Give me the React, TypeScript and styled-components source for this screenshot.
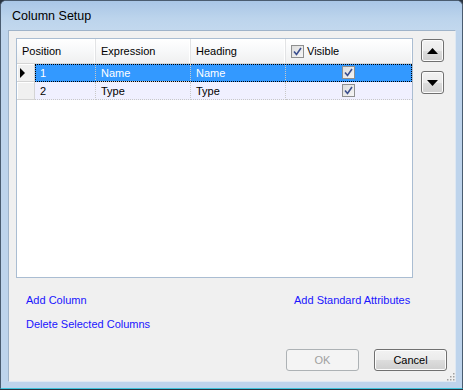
import styled, { createGlobalStyle } from 'styled-components'

const GlobalStyle = createGlobalStyle`
  html, body {
    margin: 0;
    padding: 0;
    background: #2a3440;
  }
  body {
    font-family: "Liberation Sans", Arial, sans-serif;
    font-size: 11px;
  }
`

interface ColumnRow {
  position: number
  expression: string
  heading: string
  visible: boolean
}

const rows: ColumnRow[] = [
  { position: 1, expression: 'Name', heading: 'Name', visible: true },
  { position: 2, expression: 'Type', heading: 'Type', visible: true },
]

function CheckMark() {
  return (
    <svg width="9" height="9" viewBox="0 0 9 9">
      <path d="M1 4.5 L3.5 7.5 L8 1" fill="none" stroke="#3b4f8f" strokeWidth="1.6" />
    </svg>
  )
}

function Arrow({ down }: { down?: boolean }) {
  return (
    <svg width="11" height="6" viewBox="0 0 11 6">
      {down ? <path d="M0 0 H11 L5.5 6 Z" fill="#000" /> : <path d="M0 6 H11 L5.5 0 Z" fill="#000" />}
    </svg>
  )
}

function App() {
  const selected = 0

  return (
    <>
      <GlobalStyle />
      <Window>
        <TitleBar>Column Setup</TitleBar>
        <Client>
          <TopArea>
            <GridBox>
              <HeaderRow>
                <HeaderCell $span={2}>Position</HeaderCell>
                <HeaderCell>Expression</HeaderCell>
                <HeaderCell>Heading</HeaderCell>
                <HeaderCell>
                  <CheckBox>
                    <CheckMark />
                  </CheckBox>
                  Visible
                </HeaderCell>
              </HeaderRow>
              {rows.map((row, i) => (
                <DataRow key={row.position} $selected={i === selected}>
                  <RowHeader>{i === selected && <Pointer />}</RowHeader>
                  <Cell>{row.position}</Cell>
                  <Cell>{row.expression}</Cell>
                  <Cell>{row.heading}</Cell>
                  <Cell $center $last>
                    {row.visible && (
                      <CheckBox>
                        <CheckMark />
                      </CheckBox>
                    )}
                  </Cell>
                </DataRow>
              ))}
            </GridBox>
            <SideButtons>
              <SquareButton>
                <Arrow />
              </SquareButton>
              <SquareButton>
                <Arrow down />
              </SquareButton>
            </SideButtons>
          </TopArea>

          <LinkRow>
            <Link>Add Column</Link>
            <Link>Add Standard Attributes</Link>
          </LinkRow>
          <LinkRow $second>
            <Link>Delete Selected Columns</Link>
          </LinkRow>

          <Footer>
            <DialogButton disabled>OK</DialogButton>
            <DialogButton>Cancel</DialogButton>
          </Footer>
          <Grip>
            <svg width="10" height="10" viewBox="0 0 10 10">
              {[
                [8, 2],
                [8, 5],
                [5, 5],
                [8, 8],
                [5, 8],
                [2, 8],
              ].map(([x, y]) => (
                <rect key={`${x}-${y}`} x={x} y={y} width="1.5" height="1.5" fill="#a0a0a0" />
              ))}
            </svg>
          </Grip>
        </Client>
      </Window>
    </>
  )
}

const Window = styled.div`
  width: 461px;
  height: 387px;
  border: 1px solid #4a5c70;
  border-bottom: 1px solid #3ec4dc;
  border-radius: 6px 6px 0 0;
  background: #bed4ec;
  display: flex;
  flex-direction: column;
  overflow: hidden;
`

const TitleBar = styled.div`
  height: 29px;
  flex: none;
  padding-left: 11px;
  display: flex;
  align-items: center;
  font-size: 12.5px;
  color: #000;
  background: linear-gradient(#a9c6e6, #bcd4ec 60%, #c2d8ee);
`

const Client = styled.div`
  position: relative;
  margin: 0 6px 6px 7px;
  flex: 1;
  background: #f0f0f0;
  border: 1px solid #9fb3c9;
  border-bottom-color: #dfe8f2;
  border-right-color: #dfe8f2;
  padding: 7px 8px 0 7px;
  display: flex;
  flex-direction: column;
`

const TopArea = styled.div`
  display: flex;
  gap: 8px;
  align-items: flex-start;
`

const GridBox = styled.div`
  width: 397px;
  height: 240px;
  box-sizing: border-box;
  border: 1px solid #aabdd2;
  background: #fff;
`

const HeaderRow = styled.div`
  display: grid;
  grid-template-columns: 18px 61px 95px 95px 1fr;
  height: 24px;
  border-bottom: 1px solid #d5d5d5;
`

const HeaderCell = styled.div<{ $span?: number }>`
  grid-column: span ${(p) => p.$span ?? 1};
  display: flex;
  align-items: center;
  gap: 2px;
  padding-left: 5px;
  color: #000;
  background: linear-gradient(#ffffff, #f7f8f9 50%, #f0f0f0);
  border-right: 1px solid #e2e3e5;
  box-shadow: inset -1px 0 #fff;

  &:last-child {
    border-right: none;
  }
`

const DataRow = styled.div<{ $selected?: boolean }>`
  display: grid;
  grid-template-columns: 18px 61px 95px 95px 1fr;
  height: 18px;
  background: ${(p) => (p.$selected ? '#3399ff' : '#f0f0ff')};
  color: ${(p) => (p.$selected ? '#fff' : '#000')};
  position: relative;

  ${(p) =>
    p.$selected &&
    `
    &::after {
      content: '';
      position: absolute;
      left: 18px;
      right: 0;
      top: 0;
      bottom: 0;
      border: 1px dotted #000;
      pointer-events: none;
    }
  `}
`

const RowHeader = styled.div`
  background: #f0f0f0;
  border-right: 1px solid #d4d4d4;
  border-bottom: 1px solid #d4d4d4;
  box-shadow: inset 1px 1px #fff;
  display: flex;
  align-items: center;
  padding-left: 3px;
`

const Pointer = styled.div`
  width: 0;
  height: 0;
  border-top: 5px solid transparent;
  border-bottom: 5px solid transparent;
  border-left: 5px solid #000;
`

const Cell = styled.div<{ $center?: boolean; $last?: boolean }>`
  display: flex;
  align-items: center;
  justify-content: ${(p) => (p.$center ? 'center' : 'flex-start')};
  padding-left: ${(p) => (p.$center ? '0' : '5px')};
  border-right: ${(p) => (p.$last ? 'none' : '1px dotted #c8c8c8')};
  border-bottom: 1px dotted #c8c8c8;
`

const CheckBox = styled.span`
  width: 11px;
  height: 11px;
  border: 1px solid #8e8f8f;
  background: linear-gradient(135deg, #dcdcdc, #f6f6f6);
  display: inline-flex;
  align-items: center;
  justify-content: center;
  flex: none;
  margin-right: 1px;
`

const SideButtons = styled.div`
  display: flex;
  flex-direction: column;
  gap: 9px;
  padding-top: 1px;
`

const SquareButton = styled.button`
  width: 23px;
  height: 23px;
  padding: 0;
  border: 1px solid #707070;
  border-radius: 3px;
  background: linear-gradient(#f2f2f2, #ebebeb 50%, #dddddd 51%, #cfcfcf);
  display: flex;
  align-items: center;
  justify-content: center;
  box-shadow: inset 0 0 0 1px #fcfcfc;
`

const LinkRow = styled.div<{ $second?: boolean }>`
  display: grid;
  grid-template-columns: 268px auto;
  padding-left: 10px;
  margin-top: ${(p) => (p.$second ? '11px' : '16px')};
  line-height: 13px;
`

const Link = styled.span`
  color: #1a14ff;
  font-size: 11px;
  cursor: pointer;
  justify-self: start;
`

const Footer = styled.div`
  margin-top: auto;
  margin-bottom: 10px;
  display: flex;
  justify-content: flex-end;
  gap: 15px;
`

const DialogButton = styled.button`
  width: 73px;
  height: 22px;
  padding: 0;
  font-family: "Liberation Sans", Arial, sans-serif;
  font-size: 11px;
  border-radius: 3px;
  border: 1px solid #707070;
  color: #000;
  background: linear-gradient(#f2f2f2, #ebebeb 50%, #dddddd 51%, #cfcfcf);
  box-shadow: inset 0 0 0 1px #fcfcfc;

  &:disabled {
    border-color: #adb2b5;
    color: #a0a0a0;
    background: #f4f4f4;
    box-shadow: none;
  }
`

const Grip = styled.div`
  position: absolute;
  right: 0;
  bottom: 0;
  line-height: 0;
`

export default App
